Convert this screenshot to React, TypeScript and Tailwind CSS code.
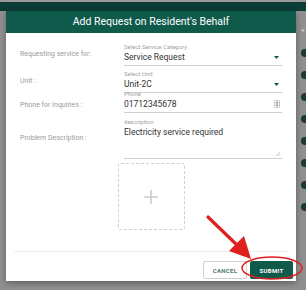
import React from 'react';

const font = { fontFamily: 'Roboto, "Noto Sans", sans-serif' };

function Caret() {
  return (
    <svg width="5" height="3" viewBox="0 0 5 3" className="mr-[3px]">
      <path d="M0 0 L5 0 L2.5 3 Z" fill="#0f5a4b" />
    </svg>
  );
}

function Spinner() {
  return (
    <svg width="6" height="8" viewBox="0 0 6 8" className="mr-[2px]">
      <rect x="0.5" y="0.5" width="5" height="7" rx="1" fill="#f2f2f2" stroke="#aaa" strokeWidth="0.6" />
      <path d="M1.7 3.2 L3 1.8 L4.3 3.2 Z" fill="#555" />
      <path d="M1.7 4.8 L3 6.2 L4.3 4.8 Z" fill="#555" />
    </svg>
  );
}

function Field({ label, children, className = '' }: { label: string; children: React.ReactNode; className?: string }) {
  return (
    <div className={`w-[161px] border-b border-[#cfcfcf] pb-[2px] ${className}`}>
      <div className="text-[6px] leading-[8px] text-[#a3a3a3]">{label}</div>
      {children}
    </div>
  );
}

function Row({ label, children, className = '' }: { label: string; children: React.ReactNode; className?: string }) {
  return (
    <div className={`flex items-center ${className}`}>
      <div className="w-[106px] text-[7px] text-[#9b9b9b]">{label}</div>
      {children}
    </div>
  );
}

export default function App() {
  return (
    <div className="relative w-[306px] h-[290px] overflow-hidden bg-[#8f8f8f]" style={font}>
      {/* page behind the overlay */}
      <div className="h-[2px] bg-[#9a9a9a]" />
      <div className="h-[9px] bg-[#0c3d35]" />
      <div className="flex justify-end pt-[16px]">
        <div className="flex w-[7px] flex-col items-end gap-[14px] text-[6px] text-white">
          <span className="mr-[1px] text-[8px] leading-[8px] text-[#dcdcdc]">+</span>
          <span className="h-[8px] w-[5px] rounded-l-full bg-[#1d3b35]" />
          <span className="h-[8px] w-[5px] rounded-l-full bg-[#1d3b35]" />
          <span className="h-[8px] w-[5px] rounded-l-full bg-[#1d3b35]" />
          <span className="h-[8px] w-[5px] rounded-l-full bg-[#1d3b35]" />
          <span className="h-[8px] w-[5px] rounded-l-full bg-[#1d3b35]" />
          <span className="h-[8px] w-[5px] rounded-l-full bg-[#1d3b35]" />
          <span className="h-[8px] w-[5px] rounded-l-full bg-[#1d3b35]" />
          <span className="h-[8px] w-[5px] rounded-l-full bg-[#1d3b35]" />
        </div>
      </div>

      {/* dialog */}
      <div className="absolute left-[6px] top-[11px] flex h-[270px] w-[290px] flex-col bg-white shadow-[0_2px_6px_rgba(0,0,0,0.35)]">
        <div className="flex h-[22px] items-center justify-center bg-[#0f5a4b] text-[10.5px] text-white">
          Add Request on Resident's Behalf
        </div>

        <div className="px-[14px] pt-[10px]">
          <Row label="Requesting service for:">
            <Field label="Select Service Category">
              <div className="flex items-center justify-between text-[8.5px] leading-[12px] text-[#333]">
                Service Request
                <Caret />
              </div>
            </Field>
          </Row>
          <Row label="Unit :" className="mt-[4px]">
            <Field label="Select Unit">
              <div className="flex items-center justify-between text-[8.5px] leading-[12px] text-[#333]">
                Unit-2C
                <Caret />
              </div>
            </Field>
          </Row>
          <Row label="Phone for Inquiries :" className="-mt-[3px] !items-end pb-[3px]">
            <Field label="Phone" className="-mb-[3px]">
              <div className="flex items-center justify-between text-[8.5px] leading-[12px] text-[#333]">
                01712345678
                <Spinner />
              </div>
            </Field>
          </Row>
          <Row label="Problem Description :" className="mt-[5px]">
            <Field label="description">
              <div className="relative h-[30px] text-[8.5px] leading-[12px] text-[#333]">
                Electricity service required
                <svg width="5" height="5" viewBox="0 0 5 5" className="absolute bottom-0 right-[2px]">
                  <path d="M1 5 L5 1 M3 5 L5 3" stroke="#aaa" strokeWidth="0.6" />
                </svg>
              </div>
            </Field>
          </Row>

          <div className="mx-auto mt-[4px] flex h-[67px] w-[67px] items-center justify-center rounded-[3px] border border-dashed border-[#cfcfcf]">
            <svg width="14" height="14" viewBox="0 0 14 14">
              <path d="M7 0 V14 M0 7 H14" stroke="#cccccc" strokeWidth="1.6" />
            </svg>
          </div>
        </div>

        <div className="mx-[8px] mt-[21px] border-t border-[#ececec]" />

        <div className="flex justify-end gap-[3px] pr-[3px] pt-[9px]">
          <button className="flex h-[18px] w-[44px] items-center justify-center rounded-[2px] border border-[#cfcfcf] bg-white text-[6px] font-bold tracking-[0.3px] text-[#4f7a72]">
            CANCEL
          </button>
          <button className="flex h-[18px] w-[43px] items-center justify-center rounded-[2px] bg-[#0f5a4b] text-[6px] font-bold tracking-[0.3px] text-white">
            SUBMIT
          </button>
        </div>
      </div>

      {/* annotation */}
      <svg className="absolute left-0 top-0" width="306" height="290" viewBox="0 0 306 290">
        <ellipse cx="272" cy="268" rx="30" ry="11" fill="none" stroke="#e0201f" strokeWidth="1.5" />
        <path d="M208 217 L238 246" stroke="#e0201f" strokeWidth="3.2" strokeLinecap="round" />
        <path d="M251 259 L229 251 L244 236 Z" fill="#e0201f" />
      </svg>
    </div>
  );
}
